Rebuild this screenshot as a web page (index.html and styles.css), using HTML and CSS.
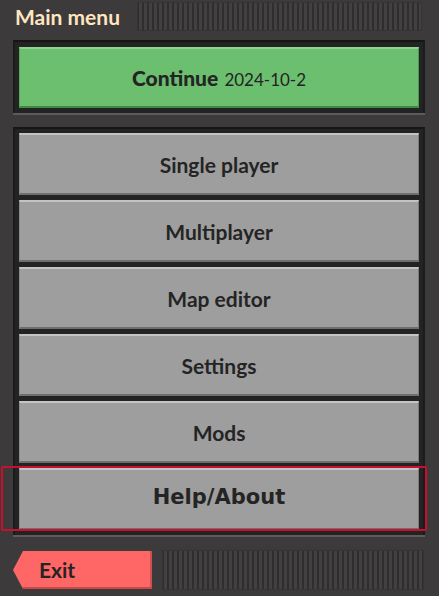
FILE: index.html
```html
<!DOCTYPE html>
<html lang="en">
<head>
    <meta charset="UTF-8">
    <meta name="viewport" content="width=device-width, initial-scale=1.0">
    <title>Main menu</title>
    <link rel="stylesheet" href="styles.css">
</head>
<body>
    <div class="frame">
        <!-- title bar -->
        <div class="titlebar">
            <h1 class="title">Main menu</h1>
            <div class="drag"></div>
        </div>

        <!-- continue -->
        <div class="inset continue-panel">
            <button class="btn btn-green"><b>Continue</b> <span class="date">2024-10-2</span></button>
        </div>

        <!-- menu buttons -->
        <div class="inset menu">
            <button class="btn">Single player</button>
            <button class="btn">Multiplayer</button>
            <button class="btn">Map editor</button>
            <button class="btn">Settings</button>
            <button class="btn">Mods</button>
            <button class="btn btn-help">Help/About</button>
        </div>

        <!-- bottom bar -->
        <div class="bottombar">
            <button class="exit">Exit</button>
            <div class="drag drag-bottom"></div>
        </div>
    </div>
</body>
</html>
```

FILE: styles.css
```css
/* base */
body {
    margin: 0;
    padding: 0;
    background-color: #3c3a3a;
    font-family: Lato, "Open Sans", sans-serif;
}

.frame {
    width: 439px;
    height: 596px;
    box-sizing: border-box;
    padding: 2px 14px 0 13px;
    display: flex;
    flex-direction: column;
    background-color: #3c3a3a;
}

/* title bar */
.titlebar {
    display: flex;
    align-items: center;
    height: 29px;
    margin-right: 3px;
}

.title {
    margin: 0 17px 0 2px;
    font-size: 21px;
    font-weight: 700;
    color: #ffe6c0;
    line-height: 29px;
}

.drag {
    flex: 1;
    align-self: stretch;
    background: repeating-linear-gradient(90deg, #2f2d2d 0 2px, #424040 2px 5px);
    box-shadow: inset 0 0 0 1px #353333;
}

/* inset panels */
.inset {
    background-color: #242323;
    border-top: 2px solid #161515;
    border-left: 2px solid #1c1b1b;
    border-right: 2px solid #1c1b1b;
    box-shadow: 0 2px 0 #5c5a5a;
}

.continue-panel {
    margin-top: 9px;
    padding: 5px 4px 5px 4px;
    height: 61px;
}

.menu {
    margin-top: 14px;
    padding: 4px 4px 5px 4px;
    display: flex;
    flex-direction: column;
    gap: 5px;
}

/* buttons */
.btn {
    display: block;
    width: 100%;
    height: 62px;
    box-sizing: border-box;
    background-color: #9e9e9e;
    border: none;
    border-top: 2px solid #c4c4c4;
    border-bottom: 2px solid #6e6e6e;
    border-left: 1px solid #8a8a8a;
    border-right: 1px solid #7a7a7a;
    font-family: Lato, "Open Sans", sans-serif;
    font-weight: 700;
    font-size: 21px;
    color: #242424;
    position: relative;
    padding: 0;
    cursor: pointer;
}

.btn-green {
    height: 61px;
    background-color: #6bbf6f;
    border-top-color: #8fd490;
    border-bottom-color: #3d8a41;
    border-left-color: #58a85c;
    border-right-color: #4a9a4e;
}

.date {
    font-weight: 400;
    font-size: 17px;
    margin-left: 1px;
}

.btn-help {
    font-family: "DejaVu Sans", sans-serif;
    font-size: 21px;
    padding-bottom: 4px;
}

/* selection highlight */
.btn-help::after {
    content: "";
    position: absolute;
    left: -19px;
    right: -9px;
    top: -4px;
    bottom: -3px;
    border: 2px solid #c8102e;
    border-radius: 2px;
}

/* bottom bar */
.bottombar {
    display: flex;
    margin-top: 15px;
    height: 40px;
    gap: 10px;
}

.exit {
    width: 139px;
    height: 38px;
    margin-top: 1px;
    border: none;
    background-color: #ff6666;
    clip-path: polygon(10px 0, 100% 0, 100% 100%, 10px 100%, 0 50%);
    box-shadow: inset 0 -2px 0 #c84848, inset -2px 0 0 #d05050;
    text-align: left;
    padding: 0 0 2px 26px;
    font-family: Lato, "Open Sans", sans-serif;
    font-weight: 700;
    font-size: 21px;
    color: #242424;
    cursor: pointer;
}

.drag-bottom {
    margin-right: 1px;
}
```
